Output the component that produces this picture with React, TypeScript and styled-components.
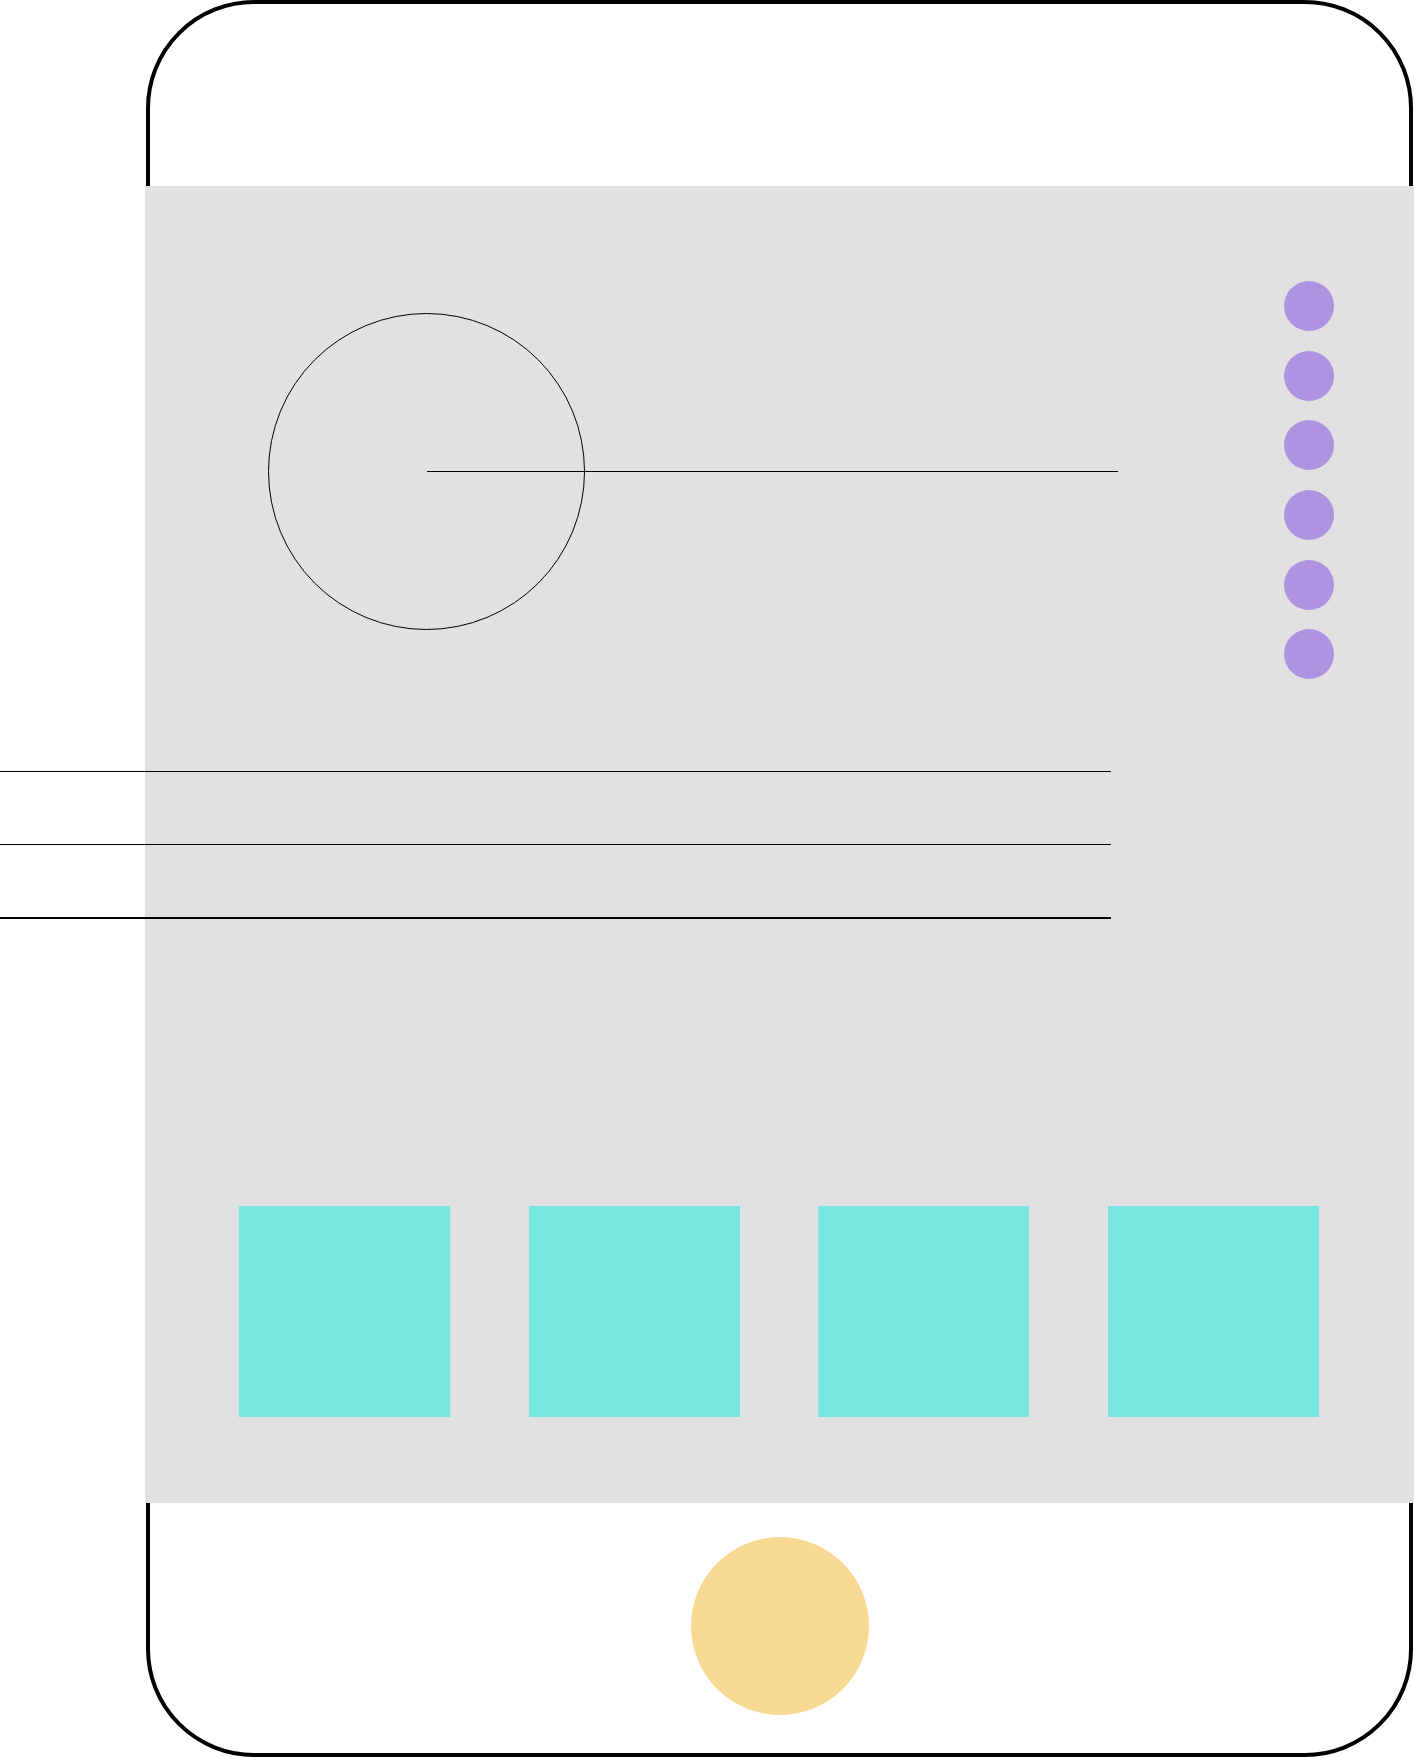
import React from "react";
import styled, { createGlobalStyle } from "styled-components";

const GlobalStyle = createGlobalStyle`
  html, body {
    margin: 0;
    padding: 0;
    background: #ffffff;
    font-family: "Liberation Sans", Arial, sans-serif;
  }
`;

const Page = styled.div`
  width: 1414px;
  height: 1758px;
  overflow: hidden;
  background: #ffffff;
`;

const Device = styled.div`
  display: flex;
  flex-direction: column;
  box-sizing: border-box;
  margin-left: 146px;
  width: 1267px;
  height: 1757px;
  border: 4px solid #000000;
  border-radius: 108px;
`;

const Screen = styled.div`
  display: flex;
  flex-direction: column;
  margin: 182px 0 0 -5px;
  width: 1269px;
  height: 1317px;
  flex-shrink: 0;
  background: #e1e1e1;
`;

const TopSection = styled.div`
  display: flex;
  justify-content: space-between;
  align-items: flex-start;
  padding: 95px 80px 0 123px;
`;

const AvatarRow = styled.div`
  display: flex;
  align-items: center;
  margin-top: 32px;
`;

const Avatar = styled.div`
  box-sizing: border-box;
  width: 317px;
  height: 317px;
  border: 1.8px solid #000000;
  border-radius: 50%;
  flex-shrink: 0;
`;

const Pointer = styled.div`
  width: 691.5px;
  height: 1.3px;
  margin-left: -158.5px;
  background: #000000;
`;

const DotColumn = styled.div`
  display: flex;
  flex-direction: column;
  gap: 19.7px;
`;

const Dot = styled.div`
  width: 50px;
  height: 50px;
  border-radius: 50%;
  background: #ad93e0;
`;

const LineStack = styled.div`
  display: flex;
  flex-direction: column;
  gap: 72px;
  margin: 91.5px 0 0 -145px;
`;

const Rule = styled.div`
  width: 1111px;
  height: 1.2px;
  background: #000000;
`;

const TileRow = styled.div`
  display: flex;
  gap: 78.5px;
  margin-top: 287px;
  padding-left: 94px;
`;

const Tile = styled.div`
  width: 211px;
  height: 211px;
  background: #78e5df;
`;

const Bezel = styled.div`
  display: flex;
  justify-content: center;
  padding-top: 34px;
`;

const HomeButton = styled.div`
  width: 178px;
  height: 178px;
  border-radius: 50%;
  background: #f8da94;
`;

export default function App() {
  const dots = [0, 1, 2, 3, 4, 5];
  const rules = [0, 1, 2];
  const tiles = [0, 1, 2, 3];

  return (
    <Page>
      <GlobalStyle />
      <Device>
        <Screen>
          <TopSection>
            <AvatarRow>
              <Avatar />
              <Pointer />
            </AvatarRow>
            <DotColumn>
              {dots.map((d) => (
                <Dot key={d} />
              ))}
            </DotColumn>
          </TopSection>
          <LineStack>
            {rules.map((r) => (
              <Rule key={r} />
            ))}
          </LineStack>
          <TileRow>
            {tiles.map((t) => (
              <Tile key={t} />
            ))}
          </TileRow>
        </Screen>
        <Bezel>
          <HomeButton />
        </Bezel>
      </Device>
    </Page>
  );
}
